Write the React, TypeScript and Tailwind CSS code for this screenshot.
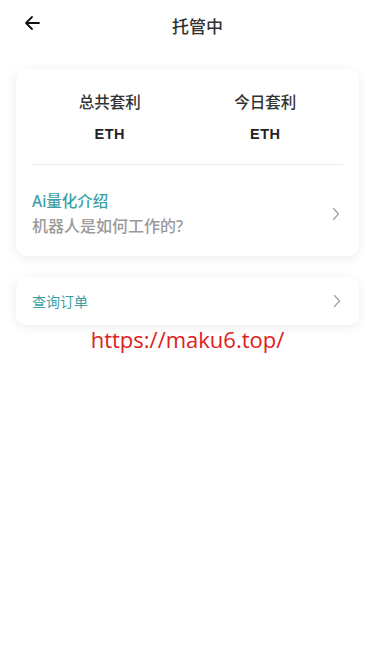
import React from "react";

const Chevron = () => (
  <svg width="10" height="14" viewBox="0 0 10 14" fill="none">
    <path d="M2.5 1.5 L7.5 7 L2.5 12.5" stroke="#a3a3a3" strokeWidth="1.3" strokeLinecap="round" strokeLinejoin="round" />
  </svg>
);

export default function App() {
  return (
    <div
      className="min-h-[667px] w-[375px] bg-white"
      style={{ fontFamily: '"Noto Sans", "Noto Sans CJK SC", sans-serif' }}
    >
      <div className="relative flex h-[54px] items-center justify-center">
        <button className="absolute left-[22px] top-[13px] flex h-[20px] w-[20px] items-center justify-center">
          <svg width="18" height="18" viewBox="0 0 18 18" fill="none">
            <path d="M16 9 H3 M9 3 L3 9 L9 15" stroke="#111" strokeWidth="1.8" strokeLinecap="round" strokeLinejoin="round" />
          </svg>
        </button>
        <span className="ml-[20px] text-[17px] font-medium text-[#333]">托管中</span>
      </div>

      <div className="mx-[16px] mt-[15px] rounded-[10px] bg-white px-[16px] shadow-[0_2px_12px_rgba(0,0,0,0.08)]">
        <div className="grid grid-cols-2 pb-[19px] pt-[22px]">
          <div className="flex flex-col items-center">
            <span className="text-[15.5px] font-medium leading-[22px] text-[#333]">总共套利</span>
            <span
              className="mt-[10px] text-[14.5px] font-bold leading-[22px] tracking-[0.5px] text-[#222]"
              style={{ fontFamily: '"Liberation Sans", Arial, sans-serif' }}
            >
              ETH
            </span>
          </div>
          <div className="flex flex-col items-center">
            <span className="text-[15.5px] font-medium leading-[22px] text-[#333]">今日套利</span>
            <span
              className="mt-[10px] text-[14.5px] font-bold leading-[22px] tracking-[0.5px] text-[#222]"
              style={{ fontFamily: '"Liberation Sans", Arial, sans-serif' }}
            >
              ETH
            </span>
          </div>
        </div>
        <div className="h-px bg-[#ececec]" />
        <div className="flex items-center justify-between pb-[19px] pt-[25px]">
          <div className="flex flex-col">
            <span className="text-[15.5px] font-medium leading-[22px] text-[#3a9fa6]">Ai量化介绍</span>
            <span className="mt-[3px] text-[16px] font-medium leading-[22px] text-[#9a9a9a]">机器人是如何工作的?</span>
          </div>
          <div className="mr-[2px]">
            <Chevron />
          </div>
        </div>
      </div>

      <div className="mx-[16px] mt-[21px] flex h-[48px] items-center justify-between rounded-[10px] bg-white px-[16px] shadow-[0_2px_12px_rgba(0,0,0,0.08)]">
        <span className="text-[14px] text-[#3a9fa6]">查询订单</span>
        <div className="mr-[1px]">
          <Chevron />
        </div>
      </div>

      <div className="flex justify-center">
        <span className="text-[22px] leading-[28px] text-[#e02020]" style={{ fontFamily: '"Open Sans", "Noto Sans", sans-serif' }}>
          https://maku6.top/
        </span>
      </div>
    </div>
  );
}
